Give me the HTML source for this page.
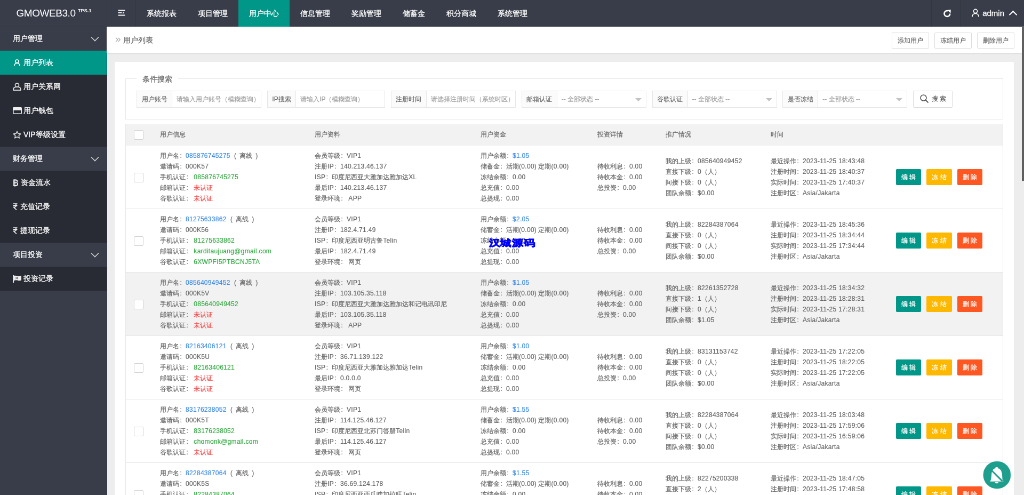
<!DOCTYPE html>
<html><head><meta charset="utf-8"><title>GMOWEB3.0</title>
<style>
html,body{margin:0;padding:0;width:1024px;height:495px;overflow:hidden;background:#ededed;}
#w{position:absolute;left:0;top:0;width:1920px;height:928px;transform:scale(0.533333);transform-origin:0 0;will-change:transform;-webkit-text-stroke:0.3px;font-family:"Liberation Sans",sans-serif;font-size:14px;color:#666;overflow:hidden;background:#ededed;}
#w:before{content:"";position:absolute;left:0;top:0;width:1920px;height:51px;background:#393D49;}
#w:after{content:"";position:absolute;left:0;top:0;width:201px;height:928px;background:#393D49;}
#hd{z-index:2;position:absolute;left:0;top:0;width:1920px;height:50px;background:#393D49;color:#fff;}
#logo{position:absolute;left:0;top:0;width:200px;height:50px;line-height:50px;text-align:center;font-size:19px;color:#fff;letter-spacing:-0.45px;-webkit-text-stroke:0;padding-left:2px;box-sizing:border-box;}
#logo sup{font-size:9px;font-weight:bold;vertical-align:baseline;position:relative;top:-8px;margin-left:4.5px;letter-spacing:0.1px}
.tnav{position:absolute;left:200px;top:0;height:50px;}
.tnav div{float:left;height:50px;line-height:50px;padding:0 20px;font-size:14px;color:#fff;}
.tnav div.ham{width:55px;padding:0;box-sizing:border-box;border-left:1px solid rgba(0,0,0,.12);border-right:1px solid rgba(0,0,0,.12);text-align:center;}
.tnav div.on{background:#009688;}
.rnav{position:absolute;right:0;top:0;height:50px;}
.rnav div{float:left;height:50px;line-height:50px;color:#fff;}
#side{position:absolute;z-index:2;left:0;top:50px;width:200px;height:878px;background:#393D49;box-shadow:inset 0 1px 0 #30333d;box-sizing:border-box;}
#side .it{height:45px;line-height:45px;color:#fff;font-size:14px;position:relative;}
#side .p{padding-left:24px;}
#side .c{padding-left:44px;background:#282B33;}
#side .c.on{background:#009688;}
#side .ic{position:absolute;left:24px;top:0;}
#side .chev{position:absolute;left:170px;top:18px;}
#bc{z-index:2;position:absolute;left:200px;top:50px;width:1720px;height:49px;background:#fff;border-bottom:1px solid #e2e2e2;box-shadow:0 1px 2px rgba(0,0,0,.07);}
#bc .t{position:absolute;left:16px;top:-1px;line-height:49px;font-size:14px;color:#666;}
#bc .btns{position:absolute;right:18px;top:11px;}
.pbtn{display:inline-block;height:28px;line-height:28px;padding:0 10px;border:1px solid #dcdcdc;border-radius:2px;font-size:12px;color:#555;background:#fff;margin-left:10px;}
#card{z-index:2;position:absolute;left:215px;top:115.5px;width:1686px;height:900px;background:#fff;border-radius:2px;}
fieldset{position:absolute;left:20px;top:31px;width:1646px;height:77px;box-sizing:border-box;border:1px solid #e6e6e6;margin:0;padding:0;}
legend{position:absolute;left:20px;top:-10px;background:#fff;padding:0 11px;font-size:14px;line-height:20px;color:#666;}
.srow{position:absolute;left:20px;top:22px;white-space:nowrap;}
.grp{float:left;height:32px;border:1px solid #e6e6e6;box-sizing:border-box;margin-right:10.8px;display:flex;}
.grp .lb{background:#FBFBFB;border-right:1px solid #e6e6e6;font-size:12px;color:#555;line-height:30px;padding:0 8.5px;}
.grp .in{font-size:12px;color:#aaa;line-height:30px;padding:0 8px;position:relative;}
.grp .arr{position:absolute;right:8px;top:13px;width:0;height:0;border-left:6px solid transparent;border-right:6px solid transparent;border-top:6px solid #c2c2c2;}
.sbtn{float:left;height:32px;box-sizing:border-box;border:1px solid #dcdcdc;border-radius:2px;width:74px;font-size:12px;color:#555;line-height:29px;text-align:center;position:relative;}
table{position:absolute;left:19.5px;top:117.1px;width:1646px;border-collapse:collapse;table-layout:fixed;font-size:12px;color:#666;-webkit-text-stroke:0.2px;}
thead tr{background:#f2f2f2;}
th{height:40px;text-align:left;font-weight:normal;padding:0 15px;box-sizing:border-box;font-size:12px;color:#666;}
td{height:119px;padding:0 15px;box-sizing:border-box;border-bottom:1px solid #e6e6e6;vertical-align:middle;line-height:20px;white-space:nowrap;overflow:hidden;}
td p{margin:0;}
tr.hov td{background:#f2f2f2;}
.cb{display:inline-block;width:16px;height:16px;border:1px solid #d2d2d2;background:#fff;border-radius:2px;vertical-align:middle;}
.c0{text-align:center;padding:0;}
.b{color:#3F8DE6;}
.g{color:#36AB45;}
.r{color:#F84A4A;}
.btn{display:inline-block;height:30px;line-height:30px;padding:0 10px;font-size:12px;color:#fff;border-radius:2px;margin-right:10px;}
.bg{background:#009688}.by{background:#FFB800}.bo{background:#FF5722}
#wm{position:absolute;left:488.7px;top:235.75px;font-size:11.3px;line-height:14px;font-weight:bold;color:#0000ff;-webkit-text-stroke:0.45px #0000ff;transform:scaleY(0.8);transform-origin:0 50%;font-family:"Liberation Sans",sans-serif;letter-spacing:0.8px;white-space:nowrap;}
#fab{position:absolute;left:983px;top:460.6px;width:28px;height:28px;}
#sb{position:absolute;left:1021.8px;top:26.7px;width:2.2px;height:154.3px;background:#5f5f5f;}
#bc .t, legend{-webkit-text-stroke:0.25px;}
.pbtn{-webkit-text-stroke:0.1px;}
td:first-child,th:first-child{border-left:1px solid #e6e6e6;}
td:last-child,th:last-child{border-right:1px solid #e6e6e6;}
.grp .lb{-webkit-text-stroke:0.15px;color:#666;}
.grp .in{-webkit-text-stroke:0.2px;color:#a0a0a0;}
.sbtn{-webkit-text-stroke:0.1px;}
.off{margin-left:4px;}
.sp{display:inline-block;width:6px;}
.cl{display:inline-block;width:12px;font-style:normal;padding-left:1.5px;box-sizing:border-box;}
.n{letter-spacing:0.3px;}

</style></head><body>
<div id="w">
 <div id="hd">
  <div id="logo">GMOWEB3.0<sup>TPS.1</sup></div>
  <div class="tnav">
   <div class="ham" style="position:relative"><svg width="16" height="14" viewBox="0 0 16 14" style="position:absolute;left:19.3px;top:17.3px"><rect x="1.5" y="1.5" width="12.8" height="1.9" fill="#fff"/><rect x="1.5" y="6.1" width="7" height="1.9" fill="#fff"/><path d="M10.2 5L13.4 7.05 10.2 9.1z" fill="#eee"/><rect x="1.5" y="10.6" width="12.8" height="1.9" fill="#fff"/></svg></div>
   <div>系统报表</div><div>项目管理</div><div class="on">用户中心</div><div>信息管理</div><div>奖励管理</div><div>储蓄金</div><div>积分商城</div><div>系统管理</div>
  </div>
  <div class="rnav">
   <div style="width:53px;text-align:center;border-left:1px solid rgba(0,0,0,.12);border-right:1px solid rgba(0,0,0,.12);"><svg width="16" height="16" viewBox="0 0 16 16" style="vertical-align:middle;position:relative;top:-1px;left:2px"><path d="M13.3 8.6A5.4 5.4 0 1 1 10.2 3.6" fill="none" stroke="#fff" stroke-width="2.6"/><path d="M8.6 1.8L14.8 1.2 14.4 8z" fill="#fff"/></svg></div>
   <div style="padding:0 15px 0 21px;font-size:15px;"><svg width="14" height="16" viewBox="0 0 14 16" style="vertical-align:-2px;margin-right:6px"><circle cx="7" cy="5" r="3.6" fill="none" stroke="#fff" stroke-width="1.6"/><path d="M1 15.5c0-4 2.7-6 6-6s6 2 6 6" fill="none" stroke="#fff" stroke-width="1.6"/></svg>admin<span style="display:inline-block;width:9px;height:9px;border-left:2px solid #fff;border-top:2px solid #fff;transform:rotate(45deg);margin-left:11px;vertical-align:-2.5px"></span></div>
  </div>
 </div>
 <div id="side">
  <div class="it p">用户管理<svg class="chev" width="16" height="10" viewBox="0 0 16 10"><path d="M1 1.5l7 7 7-7" fill="none" stroke="#d0d0d0" stroke-width="1.6"/></svg></div>
  <div class="it c on"><svg class="ic" style="left:26px;top:16px" width="12" height="13" viewBox="0 0 12 13"><circle cx="6" cy="4" r="3" fill="none" stroke="#fff" stroke-width="1.6"/><path d="M1 12.5c0-3.5 2.2-5 5-5s5 1.5 5 5" fill="none" stroke="#fff" stroke-width="1.6"/></svg>用户列表</div>
  <div class="it c"><svg class="ic" style="left:24px;top:15px" width="16" height="15" viewBox="0 0 16 15"><circle cx="8" cy="4.6" r="3.5" fill="none" stroke="#ddd" stroke-width="1.7"/><path d="M1.2 14.2V12.6c0-2.6 2-4 4-4.4h5.6c2 .4 4 1.8 4 4.4v1.6z" fill="none" stroke="#ddd" stroke-width="1.7" stroke-linejoin="round"/></svg>用户关系网</div>
  <div class="it c"><svg class="ic" style="left:24px;top:16px" width="17" height="13" viewBox="0 0 17 13"><rect x="0.8" y="0.8" width="15.4" height="11.4" rx="1" fill="none" stroke="#eee" stroke-width="1.6"/><rect x="0.8" y="0.8" width="15.4" height="5" fill="#eee"/></svg>用户钱包</div>
  <div class="it c"><svg class="ic" style="left:24px;top:15px" width="16" height="15" viewBox="0 0 16 15"><path d="M8 1.2l2 4.3 4.7.6-3.4 3.2.9 4.6L8 11.6l-4.2 2.3.9-4.6L1.3 6.1 6 5.5z" fill="none" stroke="#e8e8e8" stroke-width="1.5" stroke-linejoin="round"/></svg>VIP等级设置</div>
  <div class="it p">财务管理<svg class="chev" width="16" height="10" viewBox="0 0 16 10"><path d="M1 1.5l7 7 7-7" fill="none" stroke="#d0d0d0" stroke-width="1.6"/></svg></div>
  <div class="it c" style="padding-left:39px"><svg class="ic" style="left:24px;top:16px" width="10" height="14" viewBox="0 0 10 14"><path d="M2 1.5h3.5c2 0 3 1 3 2.6 0 1.2-.8 2-2 2.3 1.5.2 2.6 1.1 2.6 2.6 0 1.9-1.3 3-3.5 3H2z M2 6.6h4" fill="none" stroke="#eee" stroke-width="1.8"/><path d="M4 0v14" stroke="#eee" stroke-width="1.2"/></svg>资金流水</div>
  <div class="it c" style="padding-left:38px"><svg class="ic" style="left:24px;top:16px" width="9" height="13" viewBox="0 0 9 13"><path d="M0.5 1h8M0.5 4.2h8M1 1h2.2c2 0 3.2 1.3 3.2 3.1 0 1.9-1.4 3.2-3.4 3.2H1.5l5.5 5.3" fill="none" stroke="#eee" stroke-width="1.7"/></svg>充值记录</div>
  <div class="it c" style="padding-left:38px"><svg class="ic" style="left:24px;top:16px" width="9" height="13" viewBox="0 0 9 13"><path d="M0.5 1h8M0.5 4.2h8M1 1h2.2c2 0 3.2 1.3 3.2 3.1 0 1.9-1.4 3.2-3.4 3.2H1.5l5.5 5.3" fill="none" stroke="#eee" stroke-width="1.7"/></svg>提现记录</div>
  <div class="it p">项目投资<svg class="chev" width="16" height="10" viewBox="0 0 16 10"><path d="M1 1.5l7 7 7-7" fill="none" stroke="#d0d0d0" stroke-width="1.6"/></svg></div>
  <div class="it c"><svg class="ic" style="left:24px;top:16px" width="17" height="14" viewBox="0 0 17 14"><path d="M1.2 0v14" stroke="#eee" stroke-width="1.8"/><path d="M2 1.2c2-.8 3.5-.6 5.5.2s3.5 1 6 .2l2.5-.6v8.5c-2.5 1-4.5 1-6.5.2s-3.5-.8-7.5.4z" fill="#eee"/><path d="M5 3.5l5 4M10 3.5l-5 4" stroke="#393D49" stroke-width="1"/></svg>投资记录</div>
 </div>
 <div id="bc">
  <div class="t"><span style="color:#aaa;margin-right:4px;font-size:19px;position:relative;top:-1px;-webkit-text-stroke:0">&raquo;</span>用户列表</div>
  <div class="btns"><span class="pbtn">添加用户</span><span class="pbtn">冻结用户</span><span class="pbtn">删除用户</span></div>
 </div>
 <div id="card">
  <fieldset><legend>条件搜索</legend>
   <div class="srow">
    <div class="grp"><div class="lb">用户账号</div><div class="in" style="width:166px;box-sizing:border-box">请输入用户账号（模糊查询）</div></div>
    <div class="grp"><div class="lb">IP搜索</div><div class="in" style="width:166px;box-sizing:border-box">请输入IP（模糊查询）</div></div>
    <div class="grp"><div class="lb">注册时间</div><div class="in" style="width:166px;box-sizing:border-box">请选择注册时间（系统时区）</div></div>
    <div class="grp"><div class="lb">邮箱认证</div><div class="in" style="width:166px;box-sizing:border-box">-- 全部状态 --<i class="arr"></i></div></div>
    <div class="grp"><div class="lb">谷歌认证</div><div class="in" style="width:166px;box-sizing:border-box">-- 全部状态 --<i class="arr"></i></div></div>
    <div class="grp"><div class="lb">是否冻结</div><div class="in" style="width:166px;box-sizing:border-box">-- 全部状态 --<i class="arr"></i></div></div>
    <div class="sbtn"><svg width="18" height="18" viewBox="0 0 18 18" style="vertical-align:middle;margin-right:5px"><circle cx="7.5" cy="7.5" r="5.5" fill="none" stroke="#555" stroke-width="1.6"/><path d="M11.5 11.5l5 5" stroke="#555" stroke-width="1.8"/></svg>搜 索</div>
   </div>
  </fieldset>
  <table>
   <colgroup><col style="width:50px"><col style="width:290px"><col style="width:311px"><col style="width:219px"><col style="width:128px"><col style="width:197px"><col style="width:235px"><col></colgroup>
   <thead><tr><th class="c0"><i class="cb"></i></th><th>用户信息</th><th>用户资料</th><th>用户资金</th><th>投资详情</th><th>推广情况</th><th>时间</th><th></th></tr></thead>
   <tbody>
<tr><td class="c0"><i class="cb"></i></td><td><p>用户名<i class="cl"><span class="n">:</span></i><span class="b"><span class="n">085876745275</span></span> <span class="off"><span class="n">(</span><i class="sp"></i>离线<i class="sp"></i><span class="n">)</span></span></p><p>邀请码<i class="cl"><span class="n">:</span></i><span class="n">000K57</span></p><p>手机认证<i class="cl"><span class="n">:</span></i> <span class="g"><span class="n">085876745275</span></span></p><p>邮箱认证<i class="cl"><span class="n">:</span></i> <span class="r">未认证</span></p><p>谷歌认证<i class="cl"><span class="n">:</span></i> <span class="r">未认证</span></p></td><td><p>会员等级<i class="cl"><span class="n">:</span></i><span class="n">VIP1</span></p><p>注册<span class="n">IP</span><i class="cl"><span class="n">:</span></i><span class="n">140.213.46.137</span></p><p><span class="n">ISP</span><i class="cl"><span class="n">:</span></i>印度尼西亚大雅加达雅加达<span class="n">XL</span></p><p>最后<span class="n">IP</span><i class="cl"><span class="n">:</span></i><span class="n">140.213.46.137</span></p><p>登录环境<i class="cl"><span class="n">:</span></i> <span class="n">APP</span></p></td><td><p>用户余额<i class="cl"><span class="n">:</span></i><span class="b"><span class="n">$1.05</span></span></p><p>储蓄金<i class="cl"><span class="n">:</span></i>活期<span class="n">(0.00)</span> 定期<span class="n">(0.00)</span></p><p>冻结余额<i class="cl"><span class="n">:</span></i><span class="n">0.00</span></p><p>总充值<i class="cl"><span class="n">:</span></i><span class="n">0.00</span></p><p>总提现<i class="cl"><span class="n">:</span></i><span class="n">0.00</span></p></td><td><p>待收利息<i class="cl"><span class="n">:</span></i><span class="n">0.00</span></p><p>待收本金<i class="cl"><span class="n">:</span></i><span class="n">0.00</span></p><p>总投资<i class="cl"><span class="n">:</span></i><span class="n">0.00</span></p></td><td><p>我的上级<i class="cl"><span class="n">:</span></i><span class="n">085640949452</span></p><p>直接下级<i class="cl"><span class="n">:</span></i><span class="n">0</span>（人）</p><p>间接下级<i class="cl"><span class="n">:</span></i><span class="n">0</span>（人）</p><p>团队余额<i class="cl"><span class="n">:</span></i><span class="n">$0.00</span></p></td><td><p>最近操作<i class="cl"><span class="n">:</span></i><span class="n">2023-11-25 18:43:48</span></p><p>注册时间<i class="cl"><span class="n">:</span></i><span class="n">2023-11-25 18:40:37</span></p><p>实际时间<i class="cl"><span class="n">:</span></i><span class="n">2023-11-25 17:40:37</span></p><p>注册时区<i class="cl"><span class="n">:</span></i><span class="n">Asia/Jakarta</span></p></td><td class="c7"><a class="btn bg">编 辑</a><a class="btn by">冻 结</a><a class="btn bo">删 除</a></td></tr>
<tr><td class="c0"><i class="cb"></i></td><td><p>用户名<i class="cl"><span class="n">:</span></i><span class="b"><span class="n">81275633862</span></span> <span class="off"><span class="n">(</span><i class="sp"></i>离线<i class="sp"></i><span class="n">)</span></span></p><p>邀请码<i class="cl"><span class="n">:</span></i><span class="n">000K56</span></p><p>手机认证<i class="cl"><span class="n">:</span></i> <span class="g"><span class="n">81275633862</span></span></p><p>邮箱认证<i class="cl"><span class="n">:</span></i> <span class="g"><span class="n">karditaujuang@gmail.com</span></span></p><p>谷歌认证<i class="cl"><span class="n">:</span></i> <span class="g"><span class="n">6XWPFI5PTBCNJ5TA</span></span></p></td><td><p>会员等级<i class="cl"><span class="n">:</span></i><span class="n">VIP1</span></p><p>注册<span class="n">IP</span><i class="cl"><span class="n">:</span></i><span class="n">182.4.71.49</span></p><p><span class="n">ISP</span><i class="cl"><span class="n">:</span></i>印度尼西亚明古鲁<span class="n">Telin</span></p><p>最后<span class="n">IP</span><i class="cl"><span class="n">:</span></i><span class="n">182.4.71.49</span></p><p>登录环境<i class="cl"><span class="n">:</span></i> 网页</p></td><td><p>用户余额<i class="cl"><span class="n">:</span></i><span class="b"><span class="n">$2.05</span></span></p><p>储蓄金<i class="cl"><span class="n">:</span></i>活期<span class="n">(0.00)</span> 定期<span class="n">(0.00)</span></p><p>冻结余额<i class="cl"><span class="n">:</span></i><span class="n">0.00</span></p><p>总充值<i class="cl"><span class="n">:</span></i><span class="n">0.00</span></p><p>总提现<i class="cl"><span class="n">:</span></i><span class="n">0.00</span></p></td><td><p>待收利息<i class="cl"><span class="n">:</span></i><span class="n">0.00</span></p><p>待收本金<i class="cl"><span class="n">:</span></i><span class="n">0.00</span></p><p>总投资<i class="cl"><span class="n">:</span></i><span class="n">0.00</span></p></td><td><p>我的上级<i class="cl"><span class="n">:</span></i><span class="n">82284387064</span></p><p>直接下级<i class="cl"><span class="n">:</span></i><span class="n">0</span>（人）</p><p>间接下级<i class="cl"><span class="n">:</span></i><span class="n">0</span>（人）</p><p>团队余额<i class="cl"><span class="n">:</span></i><span class="n">$0.00</span></p></td><td><p>最近操作<i class="cl"><span class="n">:</span></i><span class="n">2023-11-25 18:45:36</span></p><p>注册时间<i class="cl"><span class="n">:</span></i><span class="n">2023-11-25 18:34:44</span></p><p>实际时间<i class="cl"><span class="n">:</span></i><span class="n">2023-11-25 17:34:44</span></p><p>注册时区<i class="cl"><span class="n">:</span></i><span class="n">Asia/Jakarta</span></p></td><td class="c7"><a class="btn bg">编 辑</a><a class="btn by">冻 结</a><a class="btn bo">删 除</a></td></tr>
<tr class="hov"><td class="c0"><i class="cb"></i></td><td><p>用户名<i class="cl"><span class="n">:</span></i><span class="b"><span class="n">085640949452</span></span> <span class="off"><span class="n">(</span><i class="sp"></i>离线<i class="sp"></i><span class="n">)</span></span></p><p>邀请码<i class="cl"><span class="n">:</span></i><span class="n">000K5V</span></p><p>手机认证<i class="cl"><span class="n">:</span></i> <span class="g"><span class="n">085640949452</span></span></p><p>邮箱认证<i class="cl"><span class="n">:</span></i> <span class="r">未认证</span></p><p>谷歌认证<i class="cl"><span class="n">:</span></i> <span class="r">未认证</span></p></td><td><p>会员等级<i class="cl"><span class="n">:</span></i><span class="n">VIP1</span></p><p>注册<span class="n">IP</span><i class="cl"><span class="n">:</span></i><span class="n">103.105.35.118</span></p><p><span class="n">ISP</span><i class="cl"><span class="n">:</span></i>印度尼西亚大雅加达雅加达和记电讯印尼</p><p>最后<span class="n">IP</span><i class="cl"><span class="n">:</span></i><span class="n">103.105.35.118</span></p><p>登录环境<i class="cl"><span class="n">:</span></i> <span class="n">APP</span></p></td><td><p>用户余额<i class="cl"><span class="n">:</span></i><span class="b"><span class="n">$1.05</span></span></p><p>储蓄金<i class="cl"><span class="n">:</span></i>活期<span class="n">(0.00)</span> 定期<span class="n">(0.00)</span></p><p>冻结余额<i class="cl"><span class="n">:</span></i><span class="n">0.00</span></p><p>总充值<i class="cl"><span class="n">:</span></i><span class="n">0.00</span></p><p>总提现<i class="cl"><span class="n">:</span></i><span class="n">0.00</span></p></td><td><p>待收利息<i class="cl"><span class="n">:</span></i><span class="n">0.00</span></p><p>待收本金<i class="cl"><span class="n">:</span></i><span class="n">0.00</span></p><p>总投资<i class="cl"><span class="n">:</span></i><span class="n">0.00</span></p></td><td><p>我的上级<i class="cl"><span class="n">:</span></i><span class="n">82261352728</span></p><p>直接下级<i class="cl"><span class="n">:</span></i><span class="n">1</span>（人）</p><p>间接下级<i class="cl"><span class="n">:</span></i><span class="n">0</span>（人）</p><p>团队余额<i class="cl"><span class="n">:</span></i><span class="n">$1.05</span></p></td><td><p>最近操作<i class="cl"><span class="n">:</span></i><span class="n">2023-11-25 18:34:32</span></p><p>注册时间<i class="cl"><span class="n">:</span></i><span class="n">2023-11-25 18:28:31</span></p><p>实际时间<i class="cl"><span class="n">:</span></i><span class="n">2023-11-25 17:28:31</span></p><p>注册时区<i class="cl"><span class="n">:</span></i><span class="n">Asia/Jakarta</span></p></td><td class="c7"><a class="btn bg">编 辑</a><a class="btn by">冻 结</a><a class="btn bo">删 除</a></td></tr>
<tr><td class="c0"><i class="cb"></i></td><td><p>用户名<i class="cl"><span class="n">:</span></i><span class="b"><span class="n">82163406121</span></span> <span class="off"><span class="n">(</span><i class="sp"></i>离线<i class="sp"></i><span class="n">)</span></span></p><p>邀请码<i class="cl"><span class="n">:</span></i><span class="n">000K5U</span></p><p>手机认证<i class="cl"><span class="n">:</span></i> <span class="g"><span class="n">82163406121</span></span></p><p>邮箱认证<i class="cl"><span class="n">:</span></i> <span class="r">未认证</span></p><p>谷歌认证<i class="cl"><span class="n">:</span></i> <span class="r">未认证</span></p></td><td><p>会员等级<i class="cl"><span class="n">:</span></i><span class="n">VIP1</span></p><p>注册<span class="n">IP</span><i class="cl"><span class="n">:</span></i><span class="n">36.71.139.122</span></p><p><span class="n">ISP</span><i class="cl"><span class="n">:</span></i>印度尼西亚大雅加达雅加达<span class="n">Telin</span></p><p>最后<span class="n">IP</span><i class="cl"><span class="n">:</span></i><span class="n">0.0.0.0</span></p><p>登录环境<i class="cl"><span class="n">:</span></i> 网页</p></td><td><p>用户余额<i class="cl"><span class="n">:</span></i><span class="b"><span class="n">$1.00</span></span></p><p>储蓄金<i class="cl"><span class="n">:</span></i>活期<span class="n">(0.00)</span> 定期<span class="n">(0.00)</span></p><p>冻结余额<i class="cl"><span class="n">:</span></i><span class="n">0.00</span></p><p>总充值<i class="cl"><span class="n">:</span></i><span class="n">0.00</span></p><p>总提现<i class="cl"><span class="n">:</span></i><span class="n">0.00</span></p></td><td><p>待收利息<i class="cl"><span class="n">:</span></i><span class="n">0.00</span></p><p>待收本金<i class="cl"><span class="n">:</span></i><span class="n">0.00</span></p><p>总投资<i class="cl"><span class="n">:</span></i><span class="n">0.00</span></p></td><td><p>我的上级<i class="cl"><span class="n">:</span></i><span class="n">83131153742</span></p><p>直接下级<i class="cl"><span class="n">:</span></i><span class="n">0</span>（人）</p><p>间接下级<i class="cl"><span class="n">:</span></i><span class="n">0</span>（人）</p><p>团队余额<i class="cl"><span class="n">:</span></i><span class="n">$0.00</span></p></td><td><p>最近操作<i class="cl"><span class="n">:</span></i><span class="n">2023-11-25 17:22:05</span></p><p>注册时间<i class="cl"><span class="n">:</span></i><span class="n">2023-11-25 18:22:05</span></p><p>实际时间<i class="cl"><span class="n">:</span></i><span class="n">2023-11-25 17:22:05</span></p><p>注册时区<i class="cl"><span class="n">:</span></i><span class="n">Asia/Jakarta</span></p></td><td class="c7"><a class="btn bg">编 辑</a><a class="btn by">冻 结</a><a class="btn bo">删 除</a></td></tr>
<tr><td class="c0"><i class="cb"></i></td><td><p>用户名<i class="cl"><span class="n">:</span></i><span class="b"><span class="n">83176238052</span></span> <span class="off"><span class="n">(</span><i class="sp"></i>离线<i class="sp"></i><span class="n">)</span></span></p><p>邀请码<i class="cl"><span class="n">:</span></i><span class="n">000K5T</span></p><p>手机认证<i class="cl"><span class="n">:</span></i> <span class="g"><span class="n">83176238052</span></span></p><p>邮箱认证<i class="cl"><span class="n">:</span></i> <span class="g"><span class="n">chomonk@gmail.com</span></span></p><p>谷歌认证<i class="cl"><span class="n">:</span></i> <span class="r">未认证</span></p></td><td><p>会员等级<i class="cl"><span class="n">:</span></i><span class="n">VIP1</span></p><p>注册<span class="n">IP</span><i class="cl"><span class="n">:</span></i><span class="n">114.125.46.127</span></p><p><span class="n">ISP</span><i class="cl"><span class="n">:</span></i>印度尼西亚北苏门答腊<span class="n">Telin</span></p><p>最后<span class="n">IP</span><i class="cl"><span class="n">:</span></i><span class="n">114.125.46.127</span></p><p>登录环境<i class="cl"><span class="n">:</span></i> 网页</p></td><td><p>用户余额<i class="cl"><span class="n">:</span></i><span class="b"><span class="n">$1.55</span></span></p><p>储蓄金<i class="cl"><span class="n">:</span></i>活期<span class="n">(0.00)</span> 定期<span class="n">(0.00)</span></p><p>冻结余额<i class="cl"><span class="n">:</span></i><span class="n">0.00</span></p><p>总充值<i class="cl"><span class="n">:</span></i><span class="n">0.00</span></p><p>总提现<i class="cl"><span class="n">:</span></i><span class="n">0.00</span></p></td><td><p>待收利息<i class="cl"><span class="n">:</span></i><span class="n">0.00</span></p><p>待收本金<i class="cl"><span class="n">:</span></i><span class="n">0.00</span></p><p>总投资<i class="cl"><span class="n">:</span></i><span class="n">0.00</span></p></td><td><p>我的上级<i class="cl"><span class="n">:</span></i><span class="n">82284387064</span></p><p>直接下级<i class="cl"><span class="n">:</span></i><span class="n">0</span>（人）</p><p>间接下级<i class="cl"><span class="n">:</span></i><span class="n">0</span>（人）</p><p>团队余额<i class="cl"><span class="n">:</span></i><span class="n">$0.00</span></p></td><td><p>最近操作<i class="cl"><span class="n">:</span></i><span class="n">2023-11-25 18:03:48</span></p><p>注册时间<i class="cl"><span class="n">:</span></i><span class="n">2023-11-25 17:59:06</span></p><p>实际时间<i class="cl"><span class="n">:</span></i><span class="n">2023-11-25 16:59:06</span></p><p>注册时区<i class="cl"><span class="n">:</span></i><span class="n">Asia/Jakarta</span></p></td><td class="c7"><a class="btn bg">编 辑</a><a class="btn by">冻 结</a><a class="btn bo">删 除</a></td></tr>
<tr><td class="c0"><i class="cb"></i></td><td><p>用户名<i class="cl"><span class="n">:</span></i><span class="b"><span class="n">82284387064</span></span> <span class="off"><span class="n">(</span><i class="sp"></i>离线<i class="sp"></i><span class="n">)</span></span></p><p>邀请码<i class="cl"><span class="n">:</span></i><span class="n">000K5S</span></p><p>手机认证<i class="cl"><span class="n">:</span></i> <span class="g"><span class="n">82284387064</span></span></p><p>邮箱认证<i class="cl"><span class="n">:</span></i> <span class="r">未认证</span></p><p>谷歌认证<i class="cl"><span class="n">:</span></i> <span class="r">未认证</span></p></td><td><p>会员等级<i class="cl"><span class="n">:</span></i><span class="n">VIP1</span></p><p>注册<span class="n">IP</span><i class="cl"><span class="n">:</span></i><span class="n">36.69.124.178</span></p><p><span class="n">ISP</span><i class="cl"><span class="n">:</span></i>印度尼西亚西爪哇加拉旺<span class="n">Telin</span></p><p>最后<span class="n">IP</span><i class="cl"><span class="n">:</span></i><span class="n">36.69.124.178</span></p><p>登录环境<i class="cl"><span class="n">:</span></i> 网页</p></td><td><p>用户余额<i class="cl"><span class="n">:</span></i><span class="b"><span class="n">$1.55</span></span></p><p>储蓄金<i class="cl"><span class="n">:</span></i>活期<span class="n">(0.00)</span> 定期<span class="n">(0.00)</span></p><p>冻结余额<i class="cl"><span class="n">:</span></i><span class="n">0.00</span></p><p>总充值<i class="cl"><span class="n">:</span></i><span class="n">0.00</span></p><p>总提现<i class="cl"><span class="n">:</span></i><span class="n">0.00</span></p></td><td><p>待收利息<i class="cl"><span class="n">:</span></i><span class="n">0.00</span></p><p>待收本金<i class="cl"><span class="n">:</span></i><span class="n">0.00</span></p><p>总投资<i class="cl"><span class="n">:</span></i><span class="n">0.00</span></p></td><td><p>我的上级<i class="cl"><span class="n">:</span></i><span class="n">82275200338</span></p><p>直接下级<i class="cl"><span class="n">:</span></i><span class="n">2</span>（人）</p><p>间接下级<i class="cl"><span class="n">:</span></i><span class="n">0</span>（人）</p><p>团队余额<i class="cl"><span class="n">:</span></i><span class="n">$0.00</span></p></td><td><p>最近操作<i class="cl"><span class="n">:</span></i><span class="n">2023-11-25 18:47:05</span></p><p>注册时间<i class="cl"><span class="n">:</span></i><span class="n">2023-11-25 17:48:58</span></p><p>实际时间<i class="cl"><span class="n">:</span></i><span class="n">2023-11-25 17:48:58</span></p><p>注册时区<i class="cl"><span class="n">:</span></i><span class="n">Asia/Jakarta</span></p></td><td class="c7"><a class="btn bg">编 辑</a><a class="btn by">冻 结</a><a class="btn bo">删 除</a></td></tr>
   </tbody>
  </table>
 </div>
</div>
<div id="sb"></div>
<div id="wm">汉城源码</div>
<svg id="fab" width="28" height="28" viewBox="0 0 28 28"><circle cx="14" cy="14" r="13.8" fill="#1E9E8C"/><path d="M13.7 6c-.8 0-1.3.5-1.4 1.2C9.8 7.9 8.8 10 8.6 12.5L8.1 18.3 7 20.6H20.5L19.4 18.3 18.9 12.5C18.7 10 17.6 7.9 15.1 7.2 15 6.5 14.5 6 13.7 6zM11.8 21c.3.8 1 1.3 1.9 1.3s1.6-.5 1.9-1.3z" fill="#fff"/><path d="M7.4 8.2L19.6 20.4" stroke="#1E9E8C" stroke-width="1.5"/></svg>

</body></html>
